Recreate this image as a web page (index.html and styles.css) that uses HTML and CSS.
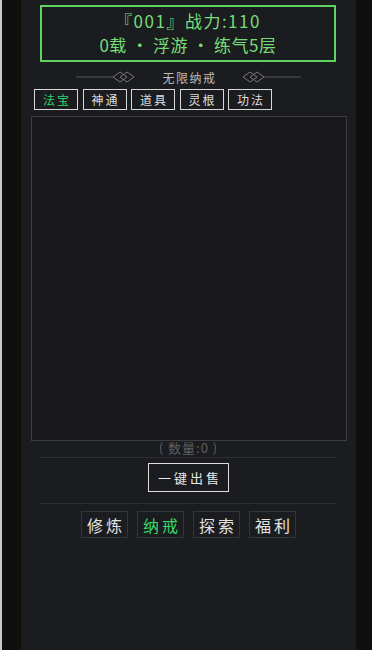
FILE: index.html
```html
<!DOCTYPE html>
<html lang="zh-CN">
<head>
  <meta charset="UTF-8">
  <meta name="viewport" content="width=device-width, initial-scale=1.0">
  <title>无限纳戒</title>
  <link rel="stylesheet" href="styles.css">
</head>
<body>
  <div class="page">
    <!-- Player header -->
    <div class="player-box">
      <div class="player-line first">『001』战力:110</div>
      <div class="player-line">0载 · 浮游 · 练气5层</div>
    </div>

    <!-- Section title -->
    <div class="section-title">
      <svg class="ornament" width="60" height="12" viewBox="0 0 60 12">
        <line x1="0" y1="6" x2="37" y2="6" stroke="#555" stroke-width="1"/>
        <polygon points="37,6 44,1 51,6 44,11" fill="none" stroke="#777" stroke-width="1"/>
        <polygon points="44,6 51,1 58,6 51,11" fill="none" stroke="#777" stroke-width="1"/>
      </svg>
      <span>无限纳戒</span>
      <svg class="ornament" width="60" height="12" viewBox="0 0 60 12">
        <polygon points="2,6 9,1 16,6 9,11" fill="none" stroke="#777" stroke-width="1"/>
        <polygon points="9,6 16,1 23,6 16,11" fill="none" stroke="#777" stroke-width="1"/>
        <line x1="23" y1="6" x2="60" y2="6" stroke="#555" stroke-width="1"/>
      </svg>
    </div>

    <!-- Tabs -->
    <div class="tabs">
      <button class="tab active">法宝</button>
      <button class="tab">神通</button>
      <button class="tab">道具</button>
      <button class="tab">灵根</button>
      <button class="tab">功法</button>
    </div>

    <!-- Inventory grid -->
    <div class="bag"></div>
    <div class="count">( 数量:0 )</div>

    <div class="divider"></div>
    <div class="sell-row">
      <button class="sell-btn">一键出售</button>
    </div>
    <div class="divider"></div>

    <!-- Bottom nav -->
    <div class="nav">
      <button class="nav-btn">修炼</button>
      <button class="nav-btn active">纳戒</button>
      <button class="nav-btn">探索</button>
      <button class="nav-btn">福利</button>
    </div>
  </div>
</body>
</html>
```

FILE: styles.css
```css
body {
  margin: 0;
  background-color: #0f100d;
  border-left: 2px solid #c9c9c9;
  font-family: 'Noto Sans CJK SC', 'Noto Sans', sans-serif;
  height: 650px;
  overflow: hidden;
}

.page {
  width: 335px;
  margin-left: 19px;
  min-height: 650px;
  background-color: #1b1c1f;
  padding-top: 5px;
  box-sizing: border-box;
}

/* Player header */
.player-box {
  margin: 0 20px 0 19px;
  border: 2px solid #5fd35f;
  padding: 2px 0 3px;
  text-align: center;
  color: #76dd76;
  font-size: 17px;
  line-height: 24px;
  letter-spacing: 0.5px;
}

.player-line.first {
  letter-spacing: 1.5px;
}

/* Section title */
.section-title {
  display: flex;
  justify-content: center;
  align-items: center;
  margin-top: 8px;
  height: 14px;
  color: #bbb;
  font-size: 12px;
  letter-spacing: 1.5px;
}

.section-title span {
  margin: 0 24px 0 26px;
}

.ornament {
  display: block;
}

/* Tabs */
.tabs {
  display: flex;
  gap: 4.5px;
  margin: 5px 0 0 13px;
}

.tab {
  width: 44px;
  height: 21px;
  padding: 0;
  background: transparent;
  border: 1px solid #d8d8d8;
  color: #ddd;
  font-family: inherit;
  font-size: 12px;
  letter-spacing: 2px;
  text-indent: 2px;
}

.tab.active {
  color: #2fd36b;
}

/* Inventory */
.bag {
  margin: 6px 0 0 10px;
  width: 316px;
  height: 325px;
  border: 1px solid #3b3c44;
  box-sizing: border-box;
  background-color: #19191c;
}

.count {
  text-align: center;
  color: #5e5f63;
  font-size: 13px;
  line-height: 13px;
  letter-spacing: 1px;
}

.divider {
  margin: 3px 20px 0 19px;
  height: 1px;
  background-color: #2c2d31;
}

.sell-row {
  display: flex;
  justify-content: center;
  padding: 5px 0 8px;
}

.sell-btn {
  width: 81px;
  height: 29px;
  padding: 0;
  background: transparent;
  border: 1px solid #ddd;
  color: #e8e8e8;
  font-family: inherit;
  font-size: 13px;
  letter-spacing: 3px;
  text-indent: 3px;
}

/* Bottom nav */
.nav {
  display: flex;
  justify-content: center;
  gap: 9px;
  margin-top: 7px;
}

.nav-btn {
  width: 47px;
  height: 27px;
  padding: 0;
  background: transparent;
  border: 1px solid #34353a;
  color: #e2e2e2;
  font-family: inherit;
  font-size: 16px;
  letter-spacing: 3px;
  text-indent: 3px;
}

.nav-btn.active {
  color: #38d96a;
}
```
